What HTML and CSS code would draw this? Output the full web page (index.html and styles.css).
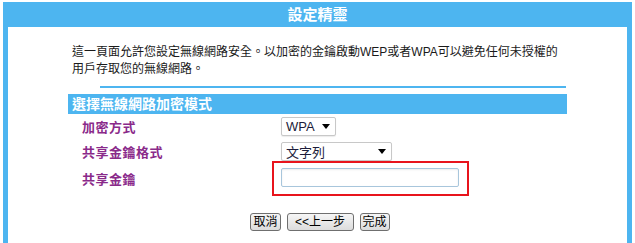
FILE: index.html
```html
<!DOCTYPE html>
<html lang="zh-Hant">
<head>
    <meta charset="UTF-8">
    <title>設定精靈</title>
    <link rel="stylesheet" href="styles.css">
</head>
<body>
    <div id="wizard">
        <div class="title">設定精靈</div>
        <div class="panel">
            <p class="intro">這一頁面允許您設定無線網路安全。以加密的金鑰啟動WEP或者WPA可以避免任何未授權的<br>用戶存取您的無線網路。</p>
            <div class="rule"></div>
            <div class="section">選擇無線網路加密模式</div>

            <div class="row first">
                <span class="label">加密方式</span>
                <div class="select short">
                    <span>WPA</span>
                    <svg width="8" height="5" viewBox="0 0 8 5"><path d="M0 0H8L4 5Z" fill="#000"/></svg>
                </div>
            </div>
            <div class="row">
                <span class="label">共享金鑰格式</span>
                <div class="select long">
                    <span>文字列</span>
                    <svg width="8" height="5" viewBox="0 0 8 5"><path d="M0 0H8L4 5Z" fill="#000"/></svg>
                </div>
            </div>
            <div class="row key">
                <span class="label">共享金鑰</span>
                <div class="highlight">
                    <input type="text" id="psk">
                </div>
            </div>

            <div class="buttons">
                <button>取消</button>
                <button class="back">&lt;&lt;上一步</button>
                <button>完成</button>
            </div>
        </div>
    </div>
</body>
</html>
```

FILE: styles.css
```css
body {
    margin: 0;
    background: #fff;
    font-family: "Liberation Sans", "Noto Sans CJK TC", sans-serif;
    font-size: 12px;
    color: #1a1a1a;
    overflow: hidden;
}

#wizard {
    margin: 2px 0 0 3px;
    width: 629px;
}

.title {
    background: #4db5f0;
    color: #fff;
    height: 25px;
    line-height: 25px;
    text-align: center;
    font-size: 15px;
    font-weight: bold;
}

.panel {
    border-left: 5px solid #4db5f0;
    border-right: 5px solid #4db5f0;
    height: 216px;
}

.intro {
    margin: 0;
    padding: 17px 0 0 64px;
    width: 520px;
    line-height: 17px;
    white-space: nowrap;
}

.rule {
    margin: 8px 0 0 92px;
    width: 466px;
    height: 2px;
    background: #4db5f0;
}

.section {
    margin: 6px 0 0 60px;
    width: 495px;
    height: 20px;
    line-height: 20px;
    padding-left: 4px;
    background: #4db5f0;
    color: #fff;
    font-size: 14px;
    font-weight: bold;
}

.row {
    display: flex;
    align-items: center;
    margin: 6px 0 0 74px;
}

.row.first {
    margin-top: 3px;
}

.row.key {
    margin-top: 0;
}

.label {
    width: 199px;
    color: #8a2a8a;
    font-size: 13px;
    font-weight: bold;
    letter-spacing: 0.5px;
}

.select {
    display: flex;
    align-items: center;
    justify-content: space-between;
    box-sizing: border-box;
    height: 19px;
    padding: 0 5px 0 4px;
    border: 1px solid #c8c8c8;
    border-radius: 2px;
    background: #fff;
    box-shadow: 0 1px 1px rgba(0, 0, 0, 0.08);
    font-size: 13px;
    color: #1c1c3a;
}

.select.short {
    width: 55px;
}

.select.long {
    width: 111px;
}

.highlight {
    margin-left: -9px;
    border: 2px solid #e8141c;
    padding: 5px 8px 7px 7px;
}

.highlight input {
    display: block;
    box-sizing: border-box;
    width: 178px;
    height: 19px;
    margin: 0;
    border: 1px solid #a8c6dc;
    border-radius: 2px;
    box-shadow: inset 0 1px 2px rgba(0, 0, 0, 0.08);
    outline: none;
}

.buttons {
    display: flex;
    justify-content: center;
    gap: 6px;
    margin-top: 17px;
    padding-left: 5px;
}

.buttons button {
    box-sizing: border-box;
    height: 18px;
    padding: 0 2px;
    border: 1px solid #6f6f6f;
    border-radius: 3px;
    background: linear-gradient(#f6f6f6, #dcdcdc);
    font-family: "Liberation Sans", "Noto Sans CJK TC", sans-serif;
    font-size: 12px;
    line-height: 16px;
    color: #000;
}

.buttons button.back {
    width: 67px;
}
```
